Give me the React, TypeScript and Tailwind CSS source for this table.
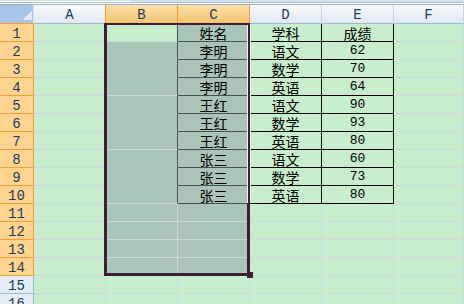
import React from "react";

const names = ["姓名", "李明", "李明", "李明", "王红", "王红", "王红", "张三", "张三", "张三"];
const subjects = ["学科", "语文", "数学", "英语", "语文", "数学", "英语", "语文", "数学", "英语"];
const scores = ["成绩", "62", "70", "64", "90", "93", "80", "60", "73", "80"];

// cell fills
const GREEN = "bg-[#c7edcc]";
const SEL = "bg-[#abc4b9]";
// gridlines
const GR = "border-r-[#d0d7e5]";
const GB = "border-b-[#d0d7e5]";
const SR = "border-r-[#c9d7d6]";
const SB = "border-b-[#c9d7d6]";
const SBN = "border-b-[#abc4b9]";
// table borders (inside the selection they are tinted)
const TR = "border-r-[#44544f]";
const TB = "border-b-[#44544f]";
const KR = "border-r-black";
const KB = "border-b-black";

const HEAD_FONT = "font-['Liberation_Mono',monospace] text-[14px] text-[#1f3b5c]";
const CJK = "font-['Noto_Sans_CJK_SC',sans-serif] text-[14px] text-black";
const NUM = "font-['Liberation_Mono',monospace] text-[13px] text-black";

type CellProps = {
  w: string;
  bg: string;
  r: string;
  b: string;
  text?: string;
};

function Cell({ w, bg, r, b, text }: CellProps) {
  const isNum = text !== undefined && /^[0-9]+$/.test(text);
  return (
    <div
      className={`${w} h-[18px] shrink-0 border-r border-b ${bg} ${r} ${b} flex items-center justify-center leading-none ${
        isNum ? NUM : CJK
      }`}
    >
      {text}
    </div>
  );
}

function TopStrip() {
  return (
    <div className="h-[5px] flex flex-col">
      <div className="h-[2px] flex">
        <div className="w-[130px] bg-white border-t border-t-[#cfe6cc]" />
        <div className="flex-1 bg-[#d6e0ec]" />
      </div>
      <div className="h-px bg-[#a9bedb]" />
      <div className="h-px bg-white" />
      <div className="h-px bg-[#9fb4cc]" />
    </div>
  );
}

function HeaderRow() {
  const normal =
    "h-[19px] shrink-0 border-r border-b bg-linear-to-b from-[#f7f9fc] to-[#e1e8f2] border-b-[#9eb6ce] flex items-center justify-center pt-[2px] leading-none";
  const active =
    "h-[19px] shrink-0 border-r border-b bg-linear-to-b from-[#fbe0ab] to-[#f5c470] border-r-[#f29c3c] border-b-[#f29c3c] flex items-center justify-center pt-[2px] leading-none";
  return (
    <div className="flex">
      <div className="w-[34px] h-[19px] shrink-0 border-r border-b border-r-[#dbe5f3] border-b-[#f29c3c] bg-[#a9c4e9] flex items-end justify-end pr-[1px] pb-[3px]">
        <svg width="9" height="9" viewBox="0 0 9 9">
          <polygon points="8.5,0.5 8.5,8.5 0.5,8.5" fill="#e2eaf6" stroke="#f3f7fc" strokeWidth="0.6" />
        </svg>
      </div>
      <div className={`w-[72px] border-r-[#f29c3c] ${normal} ${HEAD_FONT}`}>A</div>
      <div className={`w-[72px] ${active} ${HEAD_FONT}`}>B</div>
      <div className={`w-[72px] ${active} ${HEAD_FONT}`}>C</div>
      <div className={`w-[72px] border-r-[#c5d2e3] ${normal} ${HEAD_FONT}`}>D</div>
      <div className={`w-[72px] border-r-[#c5d2e3] ${normal} ${HEAD_FONT}`}>E</div>
      <div className={`w-[70px] border-r-[#c5d2e3] ${normal} ${HEAD_FONT}`}>F</div>
    </div>
  );
}

function Row({ r }: { r: number }) {
  const inSel = r <= 14;
  const inTable = r <= 10;
  const head = inSel
    ? "bg-[#fed490] border-r-[#f29c3c] border-b-[#f29c3c]"
    : "bg-[#e4ecf7] border-r-[#9eb6ce] border-b-[#9eb6ce]";

  // column B
  let bB = GREEN;
  let bR = GR;
  let bBot = GB;
  if (r === 1) {
    bB = GREEN;
    bR = TR;
    bBot = SB;
  } else if (inSel) {
    bB = SEL;
    bR = inTable ? TR : SR;
    bBot = [4, 7, 10, 11, 12, 13].includes(r) ? SB : SBN;
  }

  // column C
  const cB = inSel ? SEL : GREEN;
  const cR = inTable ? TR : inSel ? SR : GR;
  const cBot = inTable ? TB : inSel ? SB : GB;

  return (
    <div className="flex">
      <div
        className={`w-[34px] h-[18px] shrink-0 border-r border-b ${head} flex items-center justify-center pt-[2px] leading-none ${HEAD_FONT}`}
      >
        {r}
      </div>
      <Cell w="w-[72px]" bg={GREEN} r={GR} b={GB} />
      <Cell w="w-[72px]" bg={bB} r={bR} b={bBot} />
      <Cell w="w-[72px]" bg={cB} r={cR} b={cBot} text={inTable ? names[r - 1] : undefined} />
      <Cell
        w="w-[72px]"
        bg={GREEN}
        r={inTable ? KR : GR}
        b={inTable ? KB : GB}
        text={inTable ? subjects[r - 1] : undefined}
      />
      <Cell
        w="w-[72px]"
        bg={GREEN}
        r={inTable ? KR : GR}
        b={inTable ? KB : GB}
        text={inTable ? scores[r - 1] : undefined}
      />
      <Cell w="w-[70px]" bg={GREEN} r={GR} b={GB} />
    </div>
  );
}

export default function App() {
  const rows = Array.from({ length: 16 }, (_, i) => i + 1);
  return (
    <div className="w-[464px] h-[304px] overflow-hidden bg-[#c7edcc] relative select-none">
      <TopStrip />
      <HeaderRow />
      {rows.map((r) => (
        <Row key={r} r={r} />
      ))}
      {/* selection outline B1:C14 */}
      <div className="absolute left-[104px] top-[23px] w-[146px] h-[253px] border-solid border-[#3c1f33] border-t-2 border-l-[3px] border-r-[3px] border-b-[3px] pointer-events-none" />
      <div className="absolute left-[247px] top-[25px] w-px h-[178px] bg-[#eef3f1]" />
      <div className="absolute left-[250px] top-[24px] w-px h-[179px] bg-[#eef3f1]" />
      {/* fill handle */}
      <div className="absolute left-[247px] top-[272px] w-[6px] h-[6px] bg-[#3c1f33]" />
    </div>
  );
}
